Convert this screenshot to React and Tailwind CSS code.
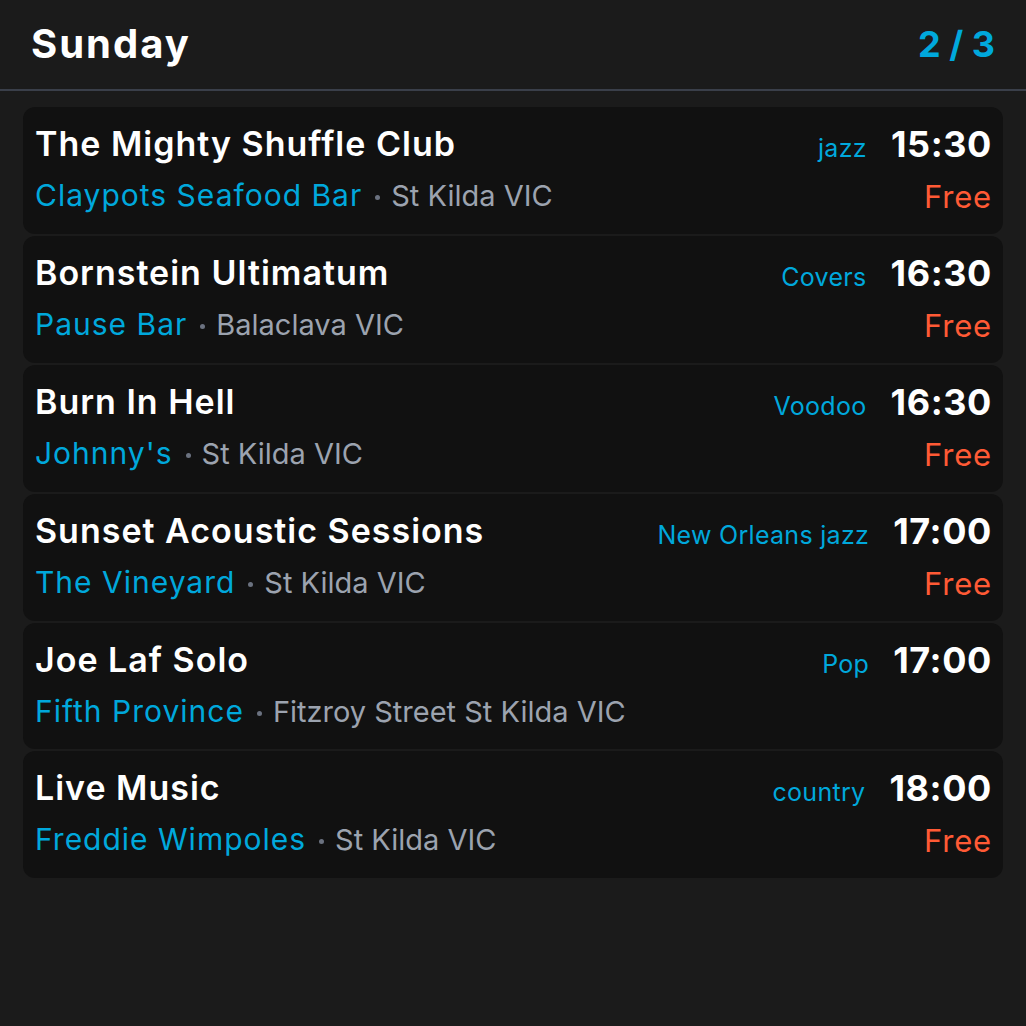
import React from 'react';

const gigs = [
  { title: 'The Mighty Shuffle Club', venue: 'Claypots Seafood Bar', place: 'St Kilda VIC', genre: 'jazz', time: '15:30', free: true },
  { title: 'Bornstein Ultimatum', venue: 'Pause Bar', place: 'Balaclava VIC', genre: 'Covers', time: '16:30', free: true },
  { title: 'Burn In Hell', venue: "Johnny's", place: 'St Kilda VIC', genre: 'Voodoo', time: '16:30', free: true },
  { title: 'Sunset Acoustic Sessions', venue: 'The Vineyard', place: 'St Kilda VIC', genre: 'New Orleans jazz', time: '17:00', free: true },
  { title: 'Joe Laf Solo', venue: 'Fifth Province', place: 'Fitzroy Street St Kilda VIC', genre: 'Pop', time: '17:00', free: false },
  { title: 'Live Music', venue: 'Freddie Wimpoles', place: 'St Kilda VIC', genre: 'country', time: '18:00', free: true },
];

const GigCard = ({ gig }) => (
  <div className="flex justify-between rounded-xl bg-[#111111] pl-[12px] pr-[11px] pt-[17px] pb-[16px]">
    <div className="flex flex-col min-w-0">
      <div className="text-[34px] leading-[40px] font-semibold text-white tracking-[1px]">{gig.title}</div>
      <div className="flex items-center h-[44px] mt-[9px]">
        <span className="text-[30px] leading-[44px] text-[#00a8dc] tracking-[1px]">{gig.venue}</span>
        <span className="w-[5px] h-[5px] rounded-full bg-[#6b7280] ml-[13px] mr-[11px] mt-[5px] shrink-0" />
        <span className="text-[29px] leading-[44px] text-[#9ca3af] mt-[2px]">{gig.place}</span>
      </div>
    </div>
    <div className="flex flex-col items-end shrink-0">
      <div className="flex items-baseline h-[40px]">
        <span className="text-[25px] leading-[32px] text-[#00a8dc] mr-[24px] tracking-[0.3px]">{gig.genre}</span>
        <span className="text-[36px] leading-[40px] font-bold text-white tracking-[0.6px]">{gig.time}</span>
      </div>
      {gig.free && (
        <div className="text-[31px] leading-[42px] mt-[12px] text-[#ff5a35] tracking-[0.8px]">Free</div>
      )}
    </div>
  </div>
);

export default function App() {
  return (
    <div className="min-h-screen bg-[#1b1b1b] font-['Inter',sans-serif]">
      <div className="flex items-center justify-between h-[91px] pb-[2px] pl-[31px] pr-[31px] border-b-2 border-[#3a3f4a]">
        <h1 className="text-[40px] leading-[48px] font-bold text-white tracking-[2px]">Sunday</h1>
        <span className="text-[36px] leading-[48px] font-bold text-[#00a8dc]">2 / 3</span>
      </div>
      <div className="flex flex-col gap-[2px] px-[23px] pt-[16px]">
        {gigs.map((g) => (
          <GigCard key={g.title} gig={g} />
        ))}
      </div>
    </div>
  );
}
